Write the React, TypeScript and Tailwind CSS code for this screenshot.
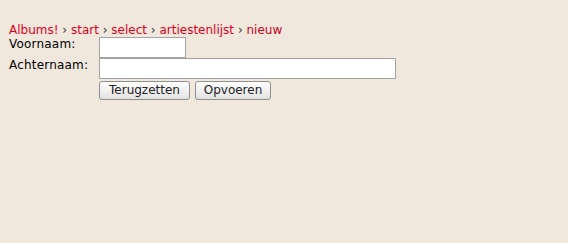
import React from "react";

export default function App() {
  const sep = <span className="text-[#333]"> › </span>;
  return (
    <div className="w-[568px] h-[243px] bg-[#f0e7dd] font-['DejaVu_Sans',sans-serif] text-[12px] text-black pl-[9px] pt-[24px]">
      <div className="leading-[13px] text-[#e0001b]">
        <span>Albums!</span>
        {sep}
        <span>start</span>
        {sep}
        <span>select</span>
        {sep}
        <span>artiestenlijst</span>
        {sep}
        <span className="text-[#c8001e]">nieuw</span>
      </div>
      <div className="flex items-start h-[21px]">
        <span className="w-[90px] leading-[13px] pt-[1px] tracking-[0.2px]">Voornaam:</span>
        <input className="w-[87px] h-[21px] bg-white border border-[#a3a3a3] outline-none" />
      </div>
      <div className="flex items-start h-[21px]">
        <span className="w-[90px] leading-[13px] pt-[1px] tracking-[0.2px]">Achternaam:</span>
        <input className="w-[297px] h-[21px] bg-white border border-[#a3a3a3] outline-none" />
      </div>
      <div className="flex gap-[5px] ml-[90px] mt-[2px]">
        <button className="w-[91px] h-[19px] rounded-[3px] border border-[#8f8f8f] bg-gradient-to-b from-white to-[#e2e2e2] text-[12px] leading-[15px] text-[#222]">Terugzetten</button>
        <button className="w-[76px] h-[19px] rounded-[3px] border border-[#8f8f8f] bg-gradient-to-b from-white to-[#e2e2e2] text-[12px] leading-[15px] text-[#222]">Opvoeren</button>
      </div>
    </div>
  );
}
